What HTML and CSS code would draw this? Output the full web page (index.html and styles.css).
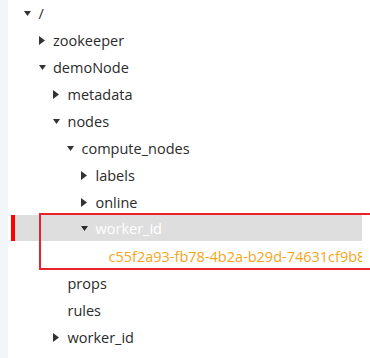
FILE: index.html
```html
<!DOCTYPE html>
<html>
<head>
<meta charset="utf-8">
<link rel="stylesheet" href="styles.css">
</head>
<body>
<div class="page">
  <div class="strip"></div>
  <div class="tree">
    <div class="row l0"><span class="caret"><svg class="down" viewBox="0 0 7 5"><polygon points="0,0 7,0 3.5,5"/></svg></span><span class="label">/</span></div>
    <div class="row l1"><span class="caret"><svg class="right" viewBox="0 0 6 9"><polygon points="0,0 6,4.5 0,9"/></svg></span><span class="label">zookeeper</span></div>
    <div class="row l1"><span class="caret"><svg class="down" viewBox="0 0 7 5"><polygon points="0,0 7,0 3.5,5"/></svg></span><span class="label">demoNode</span></div>
    <div class="row l2"><span class="caret"><svg class="right" viewBox="0 0 6 9"><polygon points="0,0 6,4.5 0,9"/></svg></span><span class="label">metadata</span></div>
    <div class="row l2"><span class="caret"><svg class="down" viewBox="0 0 7 5"><polygon points="0,0 7,0 3.5,5"/></svg></span><span class="label">nodes</span></div>
    <div class="row l3"><span class="caret"><svg class="down" viewBox="0 0 7 5"><polygon points="0,0 7,0 3.5,5"/></svg></span><span class="label">compute_nodes</span></div>
    <div class="row l4"><span class="caret"><svg class="right" viewBox="0 0 6 9"><polygon points="0,0 6,4.5 0,9"/></svg></span><span class="label">labels</span></div>
    <div class="row l4"><span class="caret"><svg class="right" viewBox="0 0 6 9"><polygon points="0,0 6,4.5 0,9"/></svg></span><span class="label">online</span></div>
    <div class="group marked">
      <div class="row l4 current"><span class="caret"><svg class="down" viewBox="0 0 7 5"><polygon points="0,0 7,0 3.5,5"/></svg></span><span class="label">worker_id</span></div>
      <div class="row l5"><span class="caret"></span><span class="label value">c55f2a93-fb78-4b2a-b29d-74631cf9b8</span></div>
    </div>
    <div class="row l2"><span class="caret"></span><span class="label">props</span></div>
    <div class="row l2"><span class="caret"></span><span class="label">rules</span></div>
    <div class="row l2"><span class="caret"><svg class="right" viewBox="0 0 6 9"><polygon points="0,0 6,4.5 0,9"/></svg></span><span class="label">worker_id</span></div>
  </div>
</div>
</body>
</html>
```

FILE: styles.css
```css
html, body {
  margin: 0;
  padding: 0;
  background: #ffffff;
}

.page {
  display: flex;
  width: 370px;
  height: 358px;
  overflow: hidden;
  font-family: "Open Sans", "Noto Sans", sans-serif;
  font-size: 14.5px;
  color: #2b2b2b;
}

.strip {
  width: 8px;
  flex: none;
  background: #f3f6f9;
}

.tree {
  flex: 1;
  min-width: 0;
  margin-left: 3px;
  margin-right: 8px;
}

.row {
  display: flex;
  align-items: center;
  height: 27px;
  white-space: nowrap;
  overflow: hidden;
}

.l0 { padding-left: 13px; }
.l1 { padding-left: 27.5px; }
.l2 { padding-left: 42px; }
.l3 { padding-left: 56px; }
.l4 { padding-left: 70px; }
.l5 { padding-left: 83px; }

.caret {
  width: 14.5px;
  flex: none;
  display: flex;
  align-items: center;
}

.caret svg {
  fill: #333333;
  display: block;
}

.caret .down {
  width: 7px;
  height: 5px;
}

.caret .right {
  width: 6px;
  height: 9px;
}

.label {
  line-height: 27px;
}

.group {
  position: relative;
}

.marked::after {
  content: "";
  position: absolute;
  left: 28px;
  right: -20px;
  top: -2px;
  bottom: 0;
  border: 2px solid #e8212b;
  pointer-events: none;
}

.current {
  background: #dedede;
  box-shadow: inset 4px 0 0 #ff0000;
  height: 26px;
  margin-top: -1px;
  margin-bottom: 2px;
}

.current .label {
  color: #ffffff;
}

.current .caret svg {
  fill: #2b2b2b;
}

.value {
  color: #f5a51c;
}
```
